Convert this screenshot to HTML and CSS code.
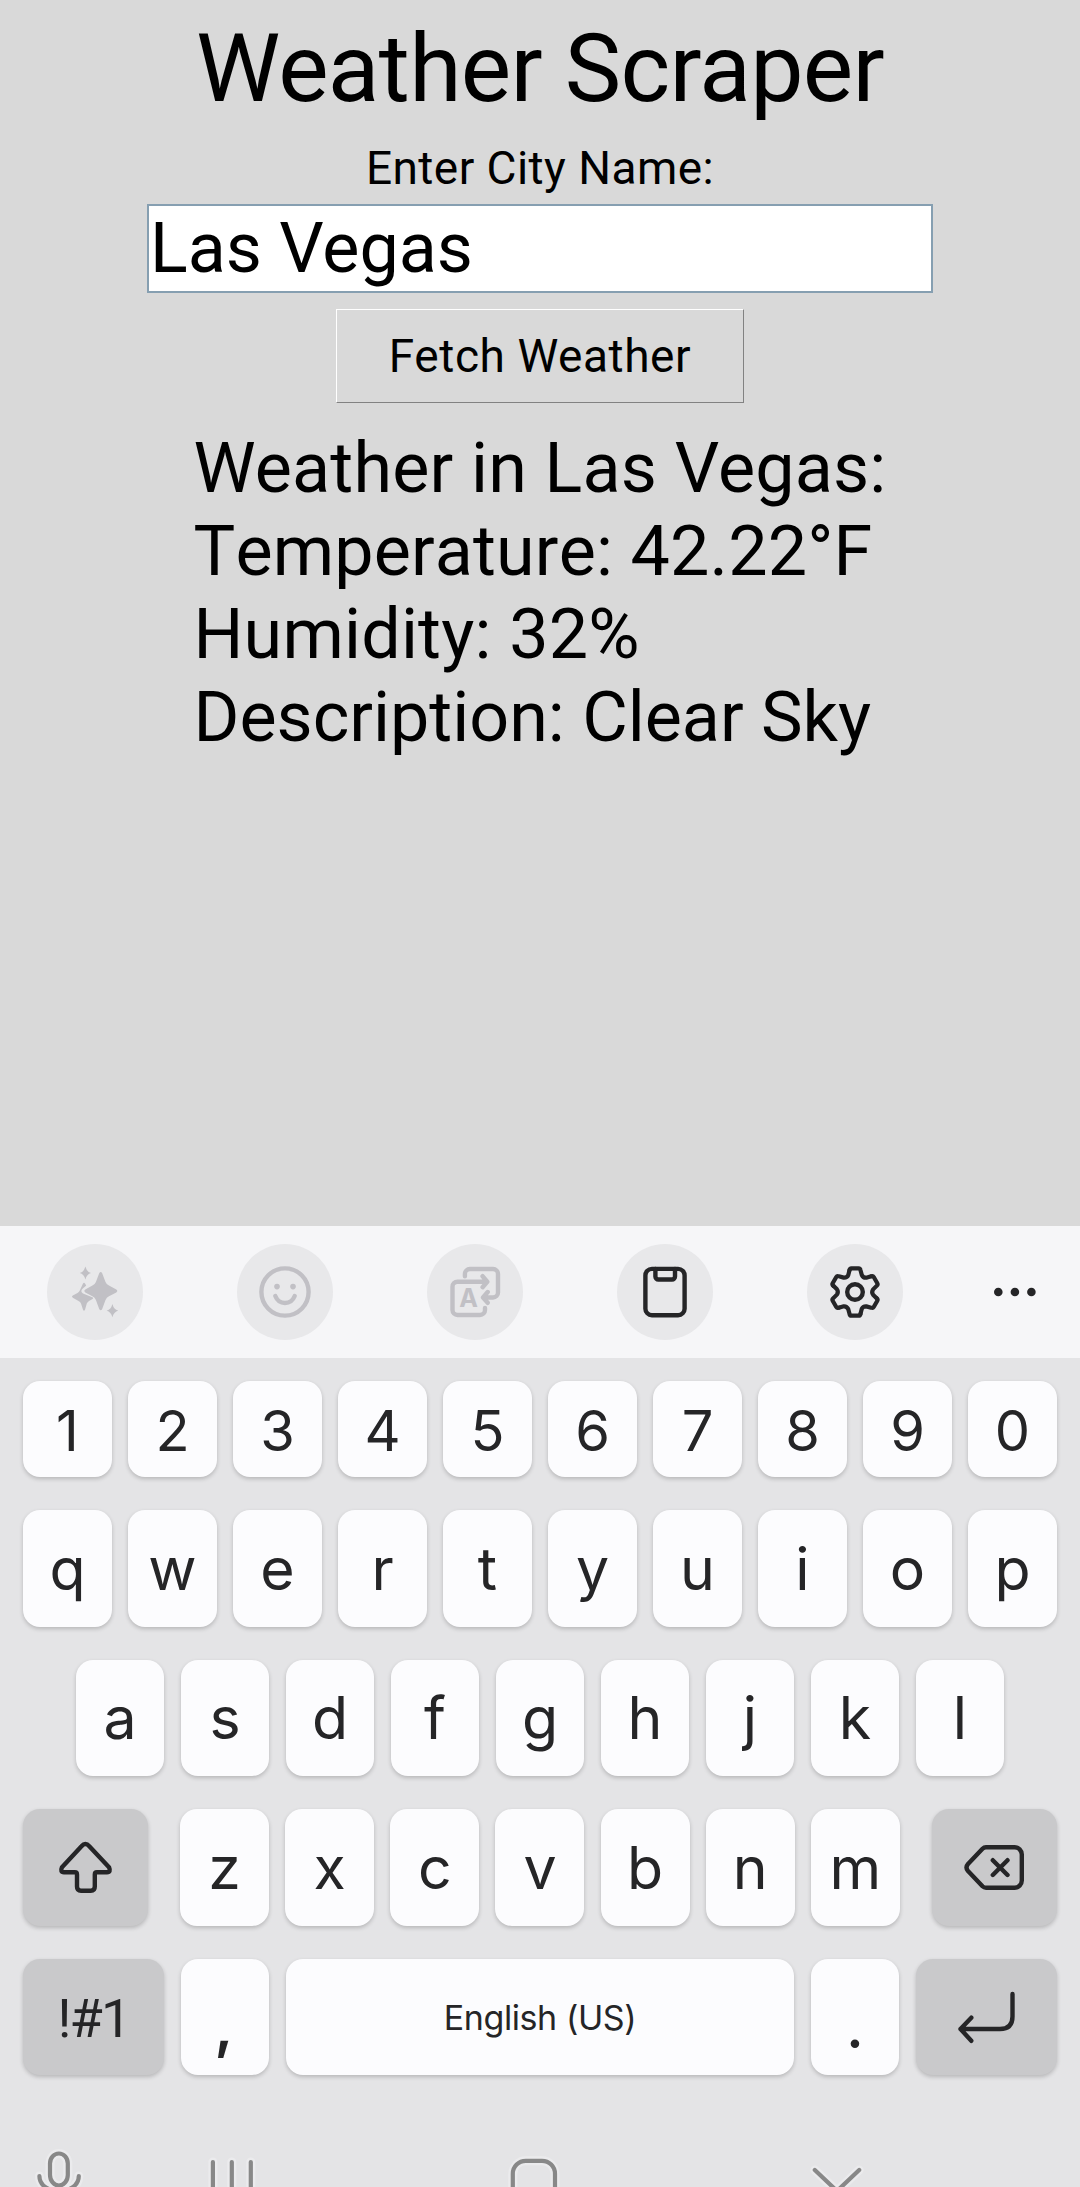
FILE: index.html
```html
<!DOCTYPE html>
<html lang="en">
<head>
<meta charset="utf-8">
<title>Weather Scraper</title>
<link rel="stylesheet" href="styles.css">
</head>
<body>
<main class="app">
  <h1 class="title">Weather Scraper</h1>
  <label class="label" for="city">Enter City Name:</label>
  <input class="city" id="city" type="text" value="Las Vegas">
  <button class="fetch" type="button">Fetch Weather</button>
  <div class="result">
    <div class="place">Weather in Las Vegas:</div>
    <div class="temperature">Temperature: 42.22°F</div>
    <div class="humidity">Humidity: 32%</div>
    <div>Description: Clear Sky</div>
  </div>
</main>
<section class="keyboard">
  <div class="toolbar">
    <div class="tool dim"><svg width="96" height="96"><g class="solid">
      <path d="M52.2 29.2Q53.7 26.8 55.2 29.2L58.5 38Q59.5 40.5 62 41.6L69.3 45.6Q71.3 47 69.3 48.4L62 52.2Q59.5 53.3 58.5 56L55.2 65Q53.7 67.4 52.2 65L48.9 56Q47.9 53.3 45.4 52.2L38.3 48.4Q36.3 47 38.3 45.6L45.4 41.6Q47.9 40.5 48.9 38Z"/>
      <path d="M36 39.600Q37 37.800 38 39.600L39.200 41.600Q38 43 36.300 44Q32.500 47 36 49.600L45.900 53.500Q46.600 54.300 45.600 55L42 56.900Q40.400 57.900 39.800 59.500L38 65.700Q37 67.800 36 65.700L34 59.500Q33.300 57.700 31.500 56.900L25.800 53.800Q24 52.700 25.800 51.600L30.500 49Q32.300 48 32.900 46.300Z"/>
      <path d="M38.4 22.4Q39.8 28 44 29Q39.8 30 38.4 35.5Q37 30 32.8 29Q37 28 38.4 22.4Z"/>
      <path d="M65.4 60.1Q66.8 65.7 71.2 66.7Q66.8 67.7 65.4 73.2Q64 67.7 59.7 66.7Q64 65.7 65.4 60.1Z"/></g></svg></div>
    <div class="tool dim"><svg width="96" height="96"><circle cx="48" cy="48" r="23.6"/><path d="M38.3 52C42 61.3 54 61.3 57.7 52"/><g class="fill"><circle cx="40" cy="42.6" r="2.8"/><circle cx="56" cy="42.6" r="2.8"/></g></svg></div>
    <div class="tool dim"><svg width="96" height="96"><path d="M60 37.700H30.500a5 5 0 0 0-5 5V66a5 5 0 0 0 5 5H53a5 5 0 0 0 5-5V64M37.900 32.300V30a5 5 0 0 1 5-5H66a5 5 0 0 1 5 5V48.500a5 5 0 0 1-5 5H56.500M55.600 32.200L60.300 37.700L55.600 43.200M60.700 48L56 53.500L60.700 58.800"/><text class="glyph" x="41.700" y="63" text-anchor="middle">A</text></svg></div>
    <div class="tool"><svg width="96" height="96"><rect x="28.400" y="24.900" width="39.200" height="46.300" rx="6.500"/><path d="M38.400 25V32.500a3 3 0 0 0 3 3H55a3 3 0 0 0 3-3V25"/></svg></div>
    <div class="tool"><svg width="96" height="96"><defs><path id="tooth" d="M-5.500 -21.800Q-5.200 -23.700 -3.600 -23.700H3.600Q5.200 -23.700 5.500 -21.800L6.800 -17Q8.300 -14 11.300 -14.300L16.130 -15.660"/></defs><g class="gear" transform="translate(48 48)"><use href="#tooth"/><use href="#tooth" transform="rotate(60)"/><use href="#tooth" transform="rotate(120)"/><use href="#tooth" transform="rotate(180)"/><use href="#tooth" transform="rotate(240)"/><use href="#tooth" transform="rotate(300)"/></g><circle cx="48" cy="48" r="7.800"/></svg></div>
    <svg class="more" width="48" height="96"><g class="fill"><circle cx="7.300" cy="48" r="4.300"/><circle cx="23.900" cy="48" r="4.300"/><circle cx="40.400" cy="48" r="4.300"/></g></svg>
  </div>
  <div class="keys">
    <div class="row digits"><div class="key">1</div><div class="key">2</div><div class="key">3</div><div class="key">4</div><div class="key">5</div><div class="key">6</div><div class="key">7</div><div class="key">8</div><div class="key">9</div><div class="key">0</div></div>
    <div class="row tall"><div class="key">q</div><div class="key">w</div><div class="key">e</div><div class="key">r</div><div class="key">t</div><div class="key">y</div><div class="key">u</div><div class="key">i</div><div class="key">o</div><div class="key">p</div></div>
    <div class="row home"><div class="key">a</div><div class="key">s</div><div class="key">d</div><div class="key">f</div><div class="key">g</div><div class="key">h</div><div class="key">j</div><div class="key">k</div><div class="key">l</div></div>
    <div class="row tall lower">
      <div class="key special side"><svg width="125" height="117"><path d="M58.500 37.300Q62.400 32.800 66.300 37.300L86 58.200Q88.200 63.300 84 63.300H74Q71.800 63.300 71.800 65.500V77.500Q71.800 81.800 67.800 81.800H58Q54 81.800 54 77.500V65.500Q54 63.300 51.800 63.300H41Q36.800 63.300 39 58.200Z"/></svg></div>
      <div class="letters"><div class="key">z</div><div class="key">x</div><div class="key">c</div><div class="key">v</div><div class="key">b</div><div class="key">n</div><div class="key">m</div></div>
      <div class="key special side"><svg width="125" height="117"><path d="M54 38.200H82.500a7.300 7.300 0 0 1 7.300 7.300V71.500a7.300 7.300 0 0 1-7.300 7.300H54Q52 78.800 50.500 77.300L36 62Q33 58.500 36 55L50.500 39.700Q52 38.200 54 38.200ZM60.800 51.200L75.500 66M75.500 51.200L60.800 66"/></svg></div>
    </div>
    <div class="row bottom">
      <div class="key special sym">!#1</div>
      <div class="key punct comma">,</div>
      <div class="key space">English (US)</div>
      <div class="key punct period">.</div>
      <div class="key special enter"><svg width="141" height="116"><path d="M96.500 35V57.500Q96.500 70 84 70H44.500M55.300 58.700L44.500 70L55.300 81.800"/></svg></div>
    </div>
  </div>
  <div class="nav">
    <svg class="mic" width="54" height="45" viewBox="32 2142 54 45"><path class="halo" d="M50 2163.500a8.900 10 0 0 1 17.800 0V2175a8.900 10.500 0 0 1-17.800 0ZM39.400 2176C39.500 2196 78.700 2196 78.800 2176"/><path d="M50 2163.500a8.900 10 0 0 1 17.800 0V2175a8.900 10.500 0 0 1-17.800 0ZM39.400 2176C39.500 2196 78.700 2196 78.800 2176"/></svg>
    <svg class="recents" width="54" height="45" viewBox="205 2142 54 45"><path class="halo" d="M212.900 2162V2200M231.800 2162V2200M250.800 2162V2200"/><path d="M212.900 2162V2200M231.800 2162V2200M250.800 2162V2200"/></svg>
    <svg class="house" width="56" height="45" viewBox="506 2142 56 45"><rect class="halo" x="512.800" y="2160.800" width="42.200" height="42" rx="13"/><rect x="512.800" y="2160.800" width="42.200" height="42" rx="13"/></svg>
    <svg class="hide" width="58" height="45" viewBox="808 2142 58 45"><path class="halo" d="M814.800 2170L837 2191L859.200 2170"/><path d="M814.800 2170L837 2191L859.200 2170"/></svg>
  </div>
</section>
</body>
</html>
```
FILE: styles.css
```css
* { box-sizing: border-box; }
body {
  margin: 0;
  width: 1080px;
  height: 2187px;
  overflow: hidden;
  display: flex;
  flex-direction: column;
  background: #d9d9d9;
  color: #000;
  font-family: Roboto, sans-serif;
}
.app {
  height: 1226px;
  display: flex;
  flex-direction: column;
  align-items: center;
}
.title {
  margin: 0;
  padding-top: 1px;
  font-size: 95px;
  font-weight: 400;
  line-height: 136px;
  letter-spacing: -0.7px;
}
.label { font-size: 46px; line-height: 63px; letter-spacing: 0.45px; }
.city {
  width: 786px;
  height: 89px;
  margin: 4px 0 16px;
  padding: 0 1px 2px;
  border: 2px solid #869fb1;
  background: #fff;
  color: #000;
  font: 70px Roboto, sans-serif;
}
.fetch {
  width: 408px;
  height: 94px;
  padding: 0;
  border: 1px solid;
  border-color: #fff #828282 #828282 #fff;
  background: #d9d9d9;
  color: #000;
  font: 46px Roboto, sans-serif;
  letter-spacing: 0.55px;
}
.result { margin-top: 24px; font-size: 70px; line-height: 83px; white-space: nowrap; }
.place { letter-spacing: 0.2px; }
.temperature { font-kerning: none; letter-spacing: 0.15px; }
.humidity { letter-spacing: 0.2px; }

.keyboard { height: 961px; background: #e4e4e6; color: #252527; font-family: Inter, sans-serif; }
.toolbar {
  height: 132px;
  padding: 18px 0 0 47px;
  display: flex;
  gap: 94px;
  background: #f6f6f8;
}
.tool { width: 96px; height: 96px; border-radius: 50%; background: #e8e8ea; color: #252527; }
.dim { color: #c1c0c5; }
.more { margin-left: -6px; }
svg {
  display: block;
  flex: none;
  fill: none;
  stroke: currentColor;
  stroke-width: 4.4px;
  stroke-linecap: round;
  stroke-linejoin: round;
}
.fill { fill: currentColor; stroke: none; }
.solid { fill: currentColor; stroke: none; }
.gear { stroke-width: 4.2px; }
.glyph { fill: currentColor; stroke: none; font: 700 25px Inter, sans-serif; }

.keys { padding: 23px 23px 0; display: flex; flex-direction: column; gap: 33px; }
.row { display: flex; justify-content: space-between; height: 116px; }
.key {
  width: 89px;
  height: 100%;
  display: flex;
  align-items: center;
  justify-content: center;
  border-radius: 17px;
  background: #fcfcfe;
  box-shadow: 0 2px 4px rgba(0, 0, 0, 0.2);
  font-size: 59px;
}
.digits { height: 96px; }
.digits .key { font-size: 56px; padding-top: 3px; }
.tall { height: 117px; }
.home { padding: 0 53px; }
.home .key { width: 88px; padding-bottom: 2px; }
.letters { width: 720px; display: flex; justify-content: space-between; }
.special { background: #c9c9cb; }
.row .side { width: 125px; padding: 0; }
.sym { width: 141px; padding: 2px 0 0; font: 54px Roboto, sans-serif; letter-spacing: -1.8px; }
.punct { width: 88px; padding-top: 21px; }
.comma { font-weight: 600; padding: 16px 2px 0 0; }
.period { font-weight: 500; padding-top: 18px; }
.space { width: 508px; font-size: 34px; letter-spacing: -0.4px; }
.enter { width: 141px; }

.nav { margin-top: 67px; height: 45px; display: flex; color: #888; }
.nav svg { stroke-width: 4.2px; }
.nav .halo { stroke: #ebebed; stroke-width: 9px; }
.mic { margin-left: 32px; }
.recents { margin-left: 119px; }
.house { margin-left: 247px; }
.hide { margin-left: 246px; }
```
